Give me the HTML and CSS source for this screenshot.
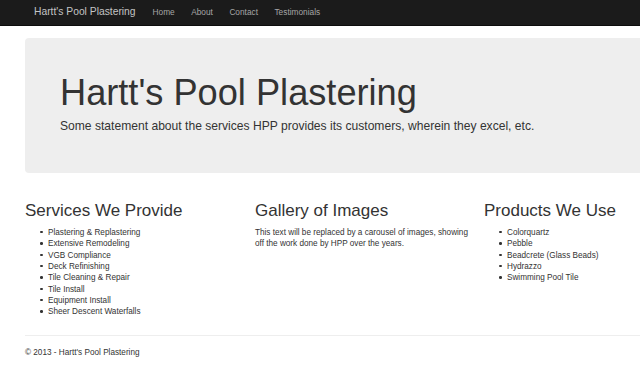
FILE: index.html
```html
<!DOCTYPE html>
<html lang="en">
<head>
  <meta charset="UTF-8" />
  <title>Hartt's Pool Plastering</title>
  <link rel="stylesheet" href="styles.css">
</head>
<body>

  <nav class="navbar">
    <div class="navbar-inner">
      <a class="brand" href="#">Hartt's Pool Plastering</a>
      <div class="nav-links">
        <a href="#">Home</a>
        <a href="#">About</a>
        <a href="#">Contact</a>
        <a href="#">Testimonials</a>
      </div>
    </div>
  </nav>

  <main class="container">
    <div class="hero-unit">
      <h1>Hartt's Pool Plastering</h1>
      <p>Some statement about the services HPP provides its customers, wherein they excel, etc.</p>
    </div>

    <div class="row">
      <div class="span">
        <h2>Services We Provide</h2>
        <ul>
          <li>Plastering &amp; Replastering</li>
          <li>Extensive Remodeling</li>
          <li>VGB Compliance</li>
          <li>Deck Refinishing</li>
          <li>Tile Cleaning &amp; Repair</li>
          <li>Tile Install</li>
          <li>Equipment Install</li>
          <li>Sheer Descent Waterfalls</li>
        </ul>
      </div>
      <div class="span">
        <h2>Gallery of Images</h2>
        <p>This text will be replaced by a carousel of images, showing off the work done by HPP over the years.</p>
      </div>
      <div class="span">
        <h2>Products We Use</h2>
        <ul>
          <li>Colorquartz</li>
          <li>Pebble</li>
          <li>Beadcrete (Glass Beads)</li>
          <li>Hydrazzo</li>
          <li>Swimming Pool Tile</li>
        </ul>
      </div>
    </div>

    <hr>

    <footer>
      <p>&copy; 2013 - Hartt's Pool Plastering</p>
    </footer>
  </main>

</body>
</html>
```

FILE: styles.css
```css
* {
  margin: 0;
  padding: 0;
  box-sizing: border-box;
}

html, body {
  font-family: "Liberation Sans", Arial, sans-serif;
  font-size: 8.2px;
  line-height: 11.35px;
  color: #333;
  background: #fff;
  overflow: hidden;
}

.navbar {
  background: #1b1b1b;
  border-bottom: 1px solid #0d0d0d;
  height: 26px;
}

.navbar-inner {
  display: flex;
  align-items: baseline;
  height: 25px;
  padding-left: 34px;
  line-height: 23px;
}

.brand {
  color: #c4c4c4;
  font-size: 10.3px;
  text-decoration: none;
  margin-right: 17px;
}

.nav-links {
  display: flex;
  gap: 16.5px;
}

.nav-links a {
  color: #a6a6a6;
  font-size: 8.3px;
  text-decoration: none;
}

.container {
  padding-left: 25px;
  width: 660px;
}

.hero-unit {
  margin-top: 12px;
  background: #eee;
  border-radius: 4px;
  height: 135px;
  padding: 35px 0 0 35px;
}

.hero-unit h1 {
  font-size: 36.2px;
  font-weight: normal;
  line-height: 40px;
  color: #333;
}

.hero-unit p {
  font-size: 12.1px;
  line-height: 18px;
  margin-top: 4px;
}

.row {
  display: grid;
  grid-template-columns: 230px 229px 1fr;
  margin-top: 28px;
}

.span h2 {
  font-size: 17px;
  font-weight: normal;
  line-height: 20px;
  margin-bottom: 6px;
  color: #333;
}

.span ul {
  list-style: none;
  padding-left: 23px;
}

.span li::before {
  content: "";
  display: inline-block;
  width: 2.5px;
  height: 2.5px;
  border-radius: 50%;
  background: #333;
  margin: 0 5.5px 1.5px -8px;
  vertical-align: middle;
}

.span p {
  width: 213px;
}

hr {
  border: none;
  border-top: 1px solid #eee;
  margin-top: 17px;
}

footer {
  padding-top: 11px;
}
```
